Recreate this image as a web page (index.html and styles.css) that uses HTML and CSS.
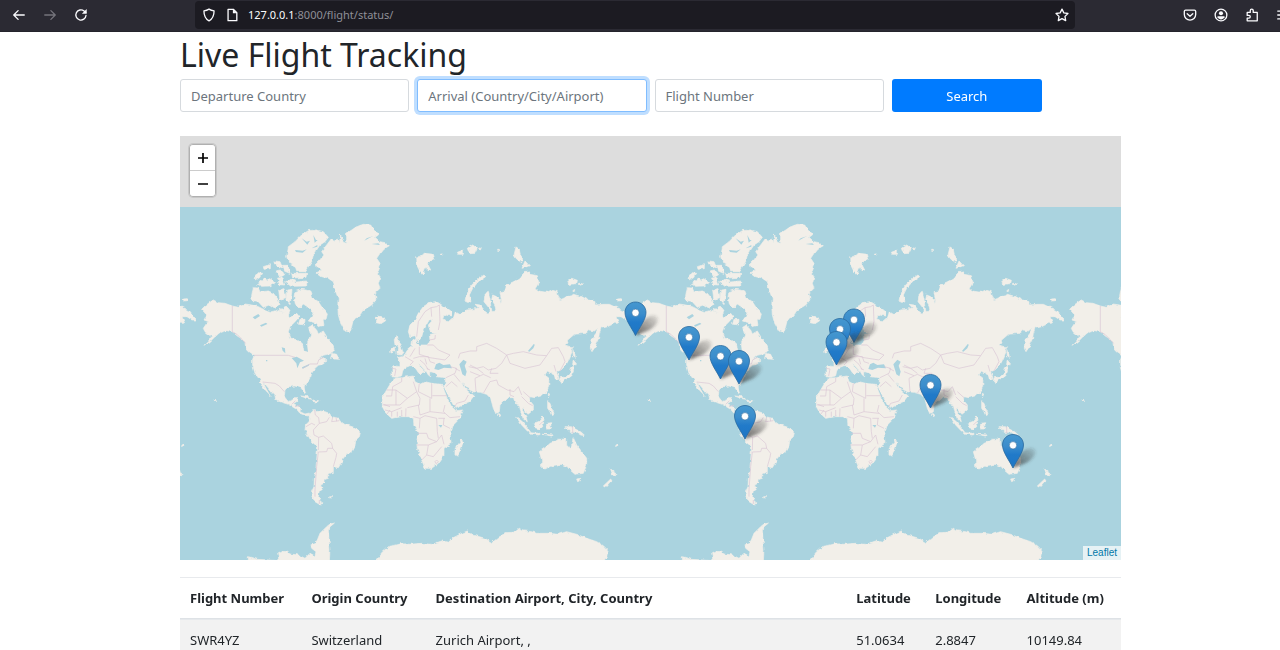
FILE: index.html
```html
<!DOCTYPE html>
<html lang="en">
<head>
<meta charset="utf-8">
<title>Live Flight Tracking</title>
<link rel="stylesheet" href="styles.css">
</head>
<body>
<header class="toolbar">
  <nav class="nav-buttons" aria-label="History">
    <button class="tool" aria-label="Back"><svg viewBox="0 0 16 16"><path d="M14 8H2.5M7 3L2 8l5 5"/></svg></button>
    <button class="tool dim" aria-label="Forward"><svg viewBox="0 0 16 16"><path d="M2 8h11.500M9 3l5 5-5 5"/></svg></button>
    <button class="tool" aria-label="Reload"><svg viewBox="0 0 16 16"><path d="M13.700 8.500A5.800 5.800 0 1 1 11.500 3.400L13.500 5"/><path class="solid" d="M14.500 1v5.500H9z"/></svg></button>
  </nav>
  <div class="address">
    <svg class="glyph" viewBox="0 0 16 16"><path d="M8 1.300c2 1.300 3.800 1.700 5.800 1.900 0 5.300-1.500 9.300-5.800 11.500C3.700 12.500 2.200 8.500 2.200 3.200 4.200 3 6 2.600 8 1.300z"/></svg>
    <svg class="glyph" viewBox="0 0 16 16"><path d="M3.500 1.500h6l4 4v9h-10z"/><path class="solid" d="M9 1.500v4.500h4.500z"/></svg>
    <span class="url"><b>127.0.0.1</b>:8000/flight/status/</span>
    <button class="tool star" aria-label="Bookmark"><svg viewBox="0 0 16 16"><path d="M8 1.300l2.100 4.300 4.700.7-3.400 3.300.8 4.800L8 12.100l-4.200 2.300.8-4.800L1.200 6.300l4.700-.7z"/></svg></button>
  </div>
  <div class="extras">
    <button class="tool" aria-label="Save to Pocket"><svg viewBox="0 0 16 16"><path d="M3 2.500h10a1.500 1.500 0 0 1 1.500 1.500v3.500a6.500 6.300 0 0 1-13 0V4A1.500 1.500 0 0 1 3 2.500z"/><path d="M4.800 6.500L8 9.500l3.200-3"/></svg></button>
    <button class="tool" aria-label="Account"><svg viewBox="0 0 16 16"><circle cx="8" cy="8" r="6.700"/><circle class="solid" cx="8" cy="6" r="2.300"/><path class="solid" d="M4 9.500h8v1.200c-1 1.600-2.400 2.300-4 2.300s-3-.7-4-2.300z"/></svg></button>
    <button class="tool" aria-label="Extensions"><svg viewBox="0 0 16 16"><path d="M2.500 5H6V3a1.700 1.700 0 0 1 3.400 0v2h4.600v9.700H2.500v-3.200h2a1.500 1.500 0 0 0 0-3h-2z"/></svg></button>
    <button class="tool" aria-label="Menu"><svg viewBox="0 0 16 16"><path d="M2 3.500h12M2 8h12M2 12.500h12"/></svg></button>
  </div>
</header>

<main class="page">
  <h1 class="title">Live Flight Tracking</h1>
  <form class="search">
    <input class="field" type="text" aria-label="Departure Country" placeholder="Departure Country">
    <input class="field" type="text" aria-label="Arrival" placeholder="Arrival (Country/City/Airport)" autofocus>
    <input class="field" type="text" aria-label="Flight Number" placeholder="Flight Number">
    <button class="submit" type="button">Search</button>
  </form>

  <section class="map" aria-label="Flight map">
    <div class="zoom">
      <button class="zoom-btn" aria-label="Zoom in"><svg viewBox="0 0 12 12"><path d="M6 1v10M1 6h10"/></svg></button>
      <button class="zoom-btn" aria-label="Zoom out"><svg viewBox="0 0 12 12"><path d="M1 6h10"/></svg></button>
    </div>
    <svg class="world" viewBox="180 207 941 353" preserveAspectRatio="xMinYMin slice">
      <defs>
        <linearGradient id="pinFill" x1="0" y1="0" x2="0" y2="1"><stop offset="0" stop-color="#4597cf"/><stop offset=".35" stop-color="#3b8dcc"/><stop offset=".6" stop-color="#217ac9"/><stop offset="1" stop-color="#1e76c4"/></linearGradient>
        <linearGradient id="pinShade" x1="0" y1="1" x2="1" y2="0"><stop offset="0" stop-color="#333" stop-opacity=".75"/><stop offset="1" stop-color="#333" stop-opacity=".1"/></linearGradient>
        <filter id="soft" x="-30%" y="-30%" width="160%" height="160%"><feGaussianBlur stdDeviation="1.700"/></filter>
        <filter id="coast" filterUnits="userSpaceOnUse" x="170" y="200" width="480" height="370">
          <feTurbulence type="fractalNoise" baseFrequency=".22" numOctaves="2" seed="4" result="n"/>
          <feDisplacementMap in="SourceGraphic" in2="n" scale="3.500" xChannelSelector="R" yChannelSelector="G"/>
        </filter>
        <g id="pin">
          <path d="M0 0L3-9C8-17 16-22 21-19 25-15 20-9 13-5z" fill="url(#pinShade)" filter="url(#soft)"/>
          <path d="M0-33.500c-6 0-10.500 4.600-10.500 10.500C-10.500-16-4-8 0 0 4-8 10.500-16 10.500-23c0-5.900-4.500-10.500-10.500-10.500z" fill="url(#pinFill)" stroke="#2a6a9e" stroke-width=".8"/>
          <circle cy="-22.700" r="3.700" fill="#fff" stroke="#2e6c9f" stroke-width=".6"/>
        </g>
        <g id="earth">
          <g filter="url(#coast)">
          <g class="land" transform="translate(180 130) scale(.33333)">
            <path d="M65 538L75 528 88 518 100 510 115 518 135 520 157 528 175 532 195 522 215 525 235 530 255 540 275 545 295 540 310 548 320 535 330 540 325 560 340 560 350 550 358 560 345 575 330 590 325 605 333 625 353 630 368 645 372 665 382 662 383 635 392 615 386 592 396 586 410 600 415 612 430 603 443 625 458 645 463 660 455 670 430 676 415 690 430 683 440 692 430 702 415 706 405 715 395 730 390 750 375 763 372 772 377 788 373 790 364 774 345 768 325 770 315 780 313 800 325 815 335 812 340 803 352 803 350 815 340 820 352 828 362 832 360 845 375 852 388 849 388 857 378 857 360 850 350 838 325 823 300 815 287 808 285 797 270 780 255 762 248 757 258 775 270 797 258 785 245 765 240 750 225 730 218 705 218 685 222 675 208 665 198 655 195 640 183 625 172 618 157 605 140 602 120 608 105 620 90 635 72 646 88 630 95 620 82 611 75 605 70 595 80 580 86 575 72 570 80 555z"/>
            <path d="M388 855L402 838 405 845 420 843 435 845 448 850 455 860 475 865 485 880 510 888 530 895 541 908 538 920 527 930 525 950 517 965 500 972 490 985 483 1000 475 1013 460 1010 460 1025 445 1033 442 1045 432 1048 432 1060 422 1065 427 1078 418 1085 415 1100 420 1113 430 1120 418 1123 405 1115 396 1100 395 1085 402 1070 403 1050 407 1020 410 990 413 950 395 935 385 918 375 900 377 885 387 875z"/>
            <path d="M405 405L420 390 432 375 425 365 440 345 455 325 462 335 470 325 478 338 482 315 490 334 500 337 500 310 515 300 530 290 550 283 572 285 580 298 595 315 585 322 600 335 615 338 625 347 612 355 600 370 590 385 600 400 592 420 600 440 595 460 600 475 585 490 588 510 575 525 550 540 535 560 520 568 515 590 508 608 495 603 482 580 475 555 473 530 475 505 465 480 460 455 445 445 425 440 410 428 425 420 415 412z"/>
            <path d="M320 380L325 350 345 335 365 315 385 302 410 300 430 305 445 322 435 335 420 345 410 360 400 375 395 395 385 410 375 425 350 425 345 410 335 400 325 395z"/>
            <path d="M222 445L235 428 248 430 240 442 228 450zM250 410L268 404 268 416 252 418zM232 462L255 444 262 453 275 446 286 458 270 468 245 469zM285 393L300 395 308 414 290 407zM288 423L304 420 314 434 300 442zM308 406L324 406 330 430 314 424zM335 430L380 430 378 442 338 444zM316 456L330 448 350 456 380 453 380 468 333 469zM293 444L308 443 314 465 298 464zM215 500L220 473 235 474 240 486 265 483 280 490 292 505 300 525 285 535 270 524 250 532 235 515 220 512zM296 480L312 476 318 502 300 512zM320 480L336 478 334 500 330 524 318 510zM345 485L365 478 388 482 395 500 415 515 428 535 442 552 438 568 429 568 432 586 415 590 405 578 385 573 395 560 400 547 385 532 370 522 358 534 346 522 342 500zM360 568L375 568 374 585 356 582zM300 540L318 528 326 536 310 548zM456 670L470 673 476 688 463 687 452 683zM583 564L595 558 612 562 617 572 603 581 588 578 592 570zM10 507L22 506 22 512 12 513zM362 798L385 800 395 808 380 805zM398 810L416 812 412 816 400 815zM446 1100L458 1100 456 1104 446 1103zM102 808L107 810 104 813zM5 946L15 940 9 950zM643 628L652 617 655 630 664 642 658 650 645 645z"/>
            <path d="M205 1280L232 1288 298 1292 293 1270 305 1263 320 1265 330 1272 355 1275 375 1285 390 1270 405 1278 408 1265 395 1255 392 1245 405 1240 412 1230 420 1210 430 1200 440 1190 450 1182 465 1178 450 1190 445 1200 447 1230 450 1260 448 1295 205 1295z"/>
          </g>
          <g class="land" transform="translate(370 205) scale(.33333)">
            <path d="M115 380L120 360 135 345 145 325 160 305 180 292 200 290 215 300 230 308 245 320 243 333 222 328 218 345 235 350 252 335 256 320 268 328 290 315 315 312 325 308 315 298 330 300 340 312 348 325 356 328 358 310 342 290 345 268 355 262 360 280 362 300 366 320 378 318 375 300 365 285 368 270 380 275 390 285 392 300 395 285 390 260 405 258 410 240 435 228 455 215 468 198 480 208 502 212 507 232 495 252 505 258 530 262 545 255 562 260 565 275 570 285 585 278 605 272 610 268 635 275 655 285 675 290 675 300 700 298 718 298 743 310 763 320 773 335 783 345 768 345 753 335 738 335 746 355 733 355 713 365 693 370 688 385 685 405 673 430 666 440 661 430 663 405 678 385 683 370 673 378 658 375 648 385 613 388 593 405 585 420 600 425 606 440 598 460 588 480 573 495 560 500 566 515 566 523 556 522 553 510 543 505 532 498 525 510 537 520 536 545 530 560 515 572 495 578 480 575 478 585 490 600 490 615 475 627 465 620 457 605 458 620 468 635 472 650 460 642 452 620 448 600 435 595 430 575 415 575 405 585 390 600 388 620 378 627 370 610 362 580 350 568 330 562 310 560 290 550 272 528 283 550 296 560 312 572 300 588 285 598 255 610 245 590 232 565 222 545 225 535 228 518 200 515 193 503 182 500 182 515 175 510 168 498 155 485 144 474 150 485 167 500 157 503 150 510 140 495 130 482 120 482 105 488 98 498 95 512 80 517 66 515 66 488 70 482 90 485 90 470 82 458 95 455 105 448 112 436 125 425 128 405 139 398 140 415 150 420 172 420 180 405 178 388 200 385 180 380 175 360 188 345 178 344 168 362 160 378 155 395 145 410 135 392 120 395z"/>
            <path d="M75 520L95 518 130 513 135 530 150 538 165 530 185 535 215 538 222 555 232 580 245 605 258 617 280 615 270 640 245 665 240 685 243 715 222 730 222 750 205 775 185 790 165 790 155 765 142 730 140 710 145 685 132 660 130 640 115 635 95 635 65 640 48 625 37 605 38 575 50 555 62 535z"/>
            <path d="M255 735L265 718 276 705 278 715 270 740 263 753 255 750zM508 740L530 725 540 715 555 710 565 703 590 702 590 722 603 728 610 698 620 720 635 740 650 760 650 780 640 805 615 808 600 795 592 785 575 778 545 782 525 792 515 788 515 765zM620 822L632 820 630 832 623 830zM722 792L732 800 741 806 735 814 728 810zM722 822L726 828 708 848 700 843zM440 637L455 648 470 665 482 682 472 678 455 660zM478 683L510 685 508 690 480 687zM490 655L505 650 518 636 522 645 518 665 510 672 495 668zM530 655L545 653 538 660 543 672 530 672zM516 688L550 690 545 693zM585 665L600 665 612 668 630 678 645 692 632 690 620 682 600 682zM533 590L540 595 545 610 552 625 545 632 540 620 533 610zM386 625L392 630 390 635 386 632zM535 565L539 567 536 575zM568 530L570 518 588 516 600 505 605 485 610 480 610 500 600 520 585 522 575 535zM610 465L622 480 608 478zM608 425L614 440 616 460 610 455zM78 442L86 432 84 415 94 425 98 440 102 442 95 450 78 448zM62 435L73 425 75 440 63 444z"/>
            <path d="M285 288L290 265 305 240 325 222 342 210 347 215 325 230 308 250 298 270 303 290 292 292zM137 155L150 155 165 145 190 148 194 162 182 168 172 175 182 195 175 198 168 185 158 210 150 200 138 175zM262 142L280 135 280 148 265 148zM292 130L308 120 322 130 315 145 298 146zM325 135L334 128 330 138zM432 150L438 126 448 132 450 148 458 160 455 173 440 162zM456 190L465 168 478 182zM593 230L605 220 622 226 620 236 600 238zM628 235L640 236 636 240zM608 255L614 253 614 259zM212 147h6v3h-6zM383 133h5v3h-5z"/>
            <path d="M20 1062L38 1040 55 1025 92 1016 120 1018 155 1015 185 1018 215 1008 235 1012 250 998 270 988 292 978 310 990 345 1000 366 1013 385 998 405 983 430 982 445 970 455 977 485 980 500 985 535 985 565 988 590 980 620 988 650 1000 680 1010 700 1022 714 1036 710 1055 700 1070 20 1070z"/>
          </g>
          </g>
          <g class="water" transform="translate(370 205) scale(.33333)">
            <path d="M193 492L198 478 208 473 220 480 240 478 246 490 222 488 205 495zM268 478L280 464 290 470 284 482 290 500 286 514 277 508zM205 660h12l-4 8zM474 438L492 416 494 420 490 430 478 440z"/>
          </g>
          <g class="water" transform="translate(180 130) scale(.33333)">
            <path d="M335 684L350 680 372 692 360 697 352 715 349 700zM366 712L388 702 386 707 368 716zM305 652L315 655 316 670 308 662zM370 645L382 650 384 666 375 662zM218 562L235 552 240 558 225 568zM240 586L258 578 262 582 244 590zM258 690h4v4h-4zM345 360L368 362 380 358 368 368 348 366zM365 325L380 335 390 332 382 344zM400 315L408 330 413 330 404 338zM412 350L395 355 412 345zM580 318L560 325 553 332 572 322zM595 340L575 342 600 345z"/>
          </g>
          <g class="border" transform="translate(180 130) scale(.33333)">
            <path d="M157 528V605L172 614 197 640M222 676H325L345 682M368 715L390 702 412 702 416 690 430 682M248 756L285 760 298 768 313 785M335 823L346 812M345 830L360 826M404 840L406 855 416 863 418 880M418 880L440 875 448 862M458 862L455 875 478 872M378 890L395 880 405 885M400 900L418 880M400 900L402 915 416 922 415 960M416 922L430 918 455 940 458 955M415 966L440 965 443 955 458 955 470 970 468 982 460 1010M415 966L410 1010 405 1080 405 1100M418 1110V1122M468 862L470 874"/>
          </g>
          <g class="border" transform="translate(370 205) scale(.33333)">
            <path d="M140 395L145 350 165 320 183 308 185 335M183 308L200 305 208 300 210 350 205 375M178 405L195 402 196 390M172 420H190L205 435 240 450 225 465 180 458 148 448 148 425M120 455L135 430M105 455L130 470 120 480M130 460L148 455 175 455 180 470 195 475M150 465L165 478 175 495M165 460L170 478M180 495L170 490M265 460L270 445 300 438 320 438V425L350 415 380 430 410 450M410 450L430 445 460 440 500 450 530 452 510 480 465 490 420 475 410 450M530 452L545 430 565 428 580 455 585 470 570 498M410 450L395 475 378 490 355 495 340 485 320 490 300 480M296 485L320 490 340 505M300 500L330 512M365 490L360 505 385 505M66 490L78 492 74 513M228 518L255 505 260 490 240 485M255 490L270 498M252 508L270 530M228 545L245 530 262 545M255 605L260 595 285 588 295 570M318 560L315 520 340 508 362 518M340 565L360 530 380 525 385 540M385 540L412 555 432 560M420 552V570L432 575M432 560L445 545 455 570M455 575L475 595 488 602M460 560L480 578M552 480L558 500M508 660L518 650M608 665V685"/>
            <path d="M50 555H78L112 580 90 600H40M78 555V600M48 573H65L68 545 95 530V518M112 580L140 560 130 530M148 535L145 560 185 580V535M187 572H232M140 560L150 580 148 600 112 608M180 580V620M145 600L150 630 180 620 225 625M225 600L220 620 240 638 270 635M108 610L107 635M95 615V635M82 620V635M65 620V635M45 615L65 620 95 608M50 628L60 615M40 598L60 605M130 635L150 640 148 670M150 640L165 632 200 640 202 680 205 700M142 685L170 685 175 700 200 710 215 690M140 720H175L200 710M175 720L170 750 190 755 215 725M155 765L170 750M222 640L220 660 240 670M195 770L200 765 205 770 198 776zM205 640L225 640M215 690L222 718"/>
          </g>
        </g>
      </defs>
      <rect class="sea" x="180" y="207" width="1800" height="900"/>
      <use href="#earth" x="-434"/>
      <use href="#earth"/>
      <use href="#earth" x="434"/>
      <use href="#earth" x="868"/>
      <g>
        <use href="#pin" x="635.500" y="335.500"/>
        <use href="#pin" x="854" y="342.500"/>
        <use href="#pin" x="840" y="352"/>
        <use href="#pin" x="689" y="360"/>
        <use href="#pin" x="836.500" y="365"/>
        <use href="#pin" x="720.500" y="379"/>
        <use href="#pin" x="739" y="384"/>
        <use href="#pin" x="930.500" y="408"/>
        <use href="#pin" x="745" y="439"/>
        <use href="#pin" x="1013" y="468"/>
      </g>
    </svg>
    <a class="credit" href="#">Leaflet</a>
  </section>

  <table class="flights">
    <colgroup><col class="c-num"><col class="c-origin"><col class="c-dest"><col class="c-lat"><col class="c-lon"><col class="c-alt"></colgroup>
    <thead><tr><th>Flight Number</th><th>Origin Country</th><th>Destination Airport, City, Country</th><th>Latitude</th><th>Longitude</th><th>Altitude (m)</th></tr></thead>
    <tbody><tr><td>SWR4YZ</td><td>Switzerland</td><td>Zurich Airport, ,</td><td>51.0634</td><td>2.8847</td><td>10149.84</td></tr></tbody>
  </table>
</main>
</body>
</html>
```
FILE: styles.css
```css
* { box-sizing: border-box; }
html { scrollbar-width: none; }
body { margin: 0; background: #fff; color: #212529; font: 13px/20px "Noto Sans", sans-serif; overflow-x: hidden; }
button, input { font: inherit; }

.toolbar { display: flex; align-items: center; justify-content: space-between; height: 32px; padding-bottom: 2px; background: #2b2a33; border-bottom: 1px solid #25242c; color: #fbfbfe; overflow: hidden; }
.nav-buttons { display: flex; gap: 17px; padding-left: 12px; flex: 0 0 195px; }
.tool { display: block; width: 14px; height: 14px; padding: 0; border: 0; background: none; color: inherit; }
.tool svg, .glyph { display: block; width: 14px; height: 14px; fill: none; stroke: currentColor; stroke-width: 1.5; stroke-linejoin: round; stroke-linecap: round; }
.solid { fill: currentColor; stroke: none; }
.dim { color: #75747c; }
.address { display: flex; align-items: center; gap: 9px; flex: 1; height: 28px; padding: 0 6px 0 7px; border-radius: 4px; background: #1c1b22; }
.url { font-size: 11px; color: #8f8f97; flex: 1; }
.url b { font-weight: 400; color: #fbfbfe; }
.extras { display: flex; gap: 17px; flex: 0 0 205px; min-width: 0; padding-left: 108px; }
.extras .tool { flex: none; }

.page { padding: 0 159px 0 180px; }
.title { margin: 0; padding: 3px 0 4px; font-size: 32px; line-height: 40px; font-weight: 400; }
.search { display: grid; grid-template-columns: repeat(12, 1fr); column-gap: 8px; margin-bottom: 24px; }
.field { grid-column: span 3; width: 100%; min-width: 0; height: 33px; padding: 0 10px; border: 1px solid #d6dade; border-radius: 3px; background: #fff; color: #495057; outline: 0; }
.field::placeholder { color: #6c757d; opacity: 1; }
.field:focus { border-color: #80bdff; box-shadow: 0 0 0 3px #bfdeff; }
.submit { grid-column: span 2; height: 33px; border: 0; border-radius: 3px; background: #007bff; color: #fff; }

.map { position: relative; height: 424px; padding-top: 71px; background: #ddd; overflow: hidden; }
.world { display: block; width: 100%; height: 353px; }
.sea { fill: #aad3df; }
.land path { fill: #f2efe9; stroke: #f2efe9; stroke-width: 2; }
.water path { fill: #aad3df; }
.border path { fill: none; stroke: #d9c6d4; stroke-width: 2; stroke-linejoin: round; }
.zoom { position: absolute; top: 8px; left: 9px; border: 1px solid #b0b0b0; border-radius: 4px; box-shadow: 0 0 0 1px #c8c8c8; overflow: hidden; }
.zoom-btn { display: grid; place-items: center; width: 25px; height: 25px; padding: 0; border: 0; background: #fff; }
.zoom-btn + .zoom-btn { height: 26px; border-top: 1px solid #ccc; }
.zoom-btn svg { width: 12px; height: 12px; fill: none; stroke: #000; stroke-width: 1.700; }
.credit { position: absolute; right: 0; bottom: 0; padding: 0 4px; background: #e6f2f5; color: #0078a8; font: 10px/14px "Liberation Sans", Arial, sans-serif; text-decoration: none; }

.flights { width: 100%; margin-top: 17px; border-collapse: separate; border-spacing: 0; table-layout: fixed; }
.flights th, .flights td { padding: 10px; border-top: 1px solid #e8eaed; text-align: left; white-space: nowrap; }
.flights th { border-bottom: 1px solid #dee2e6; font-weight: 700; }
.flights td { border-top-color: #e6e9ec; background: #f2f2f2; }
.c-num { width: 12.9%; }
.c-origin { width: 13.2%; }
.c-dest { width: 44.7%; }
.c-lat { width: 8.4%; }
.c-lon { width: 9.7%; }
.c-alt { width: 11.1%; }
```
